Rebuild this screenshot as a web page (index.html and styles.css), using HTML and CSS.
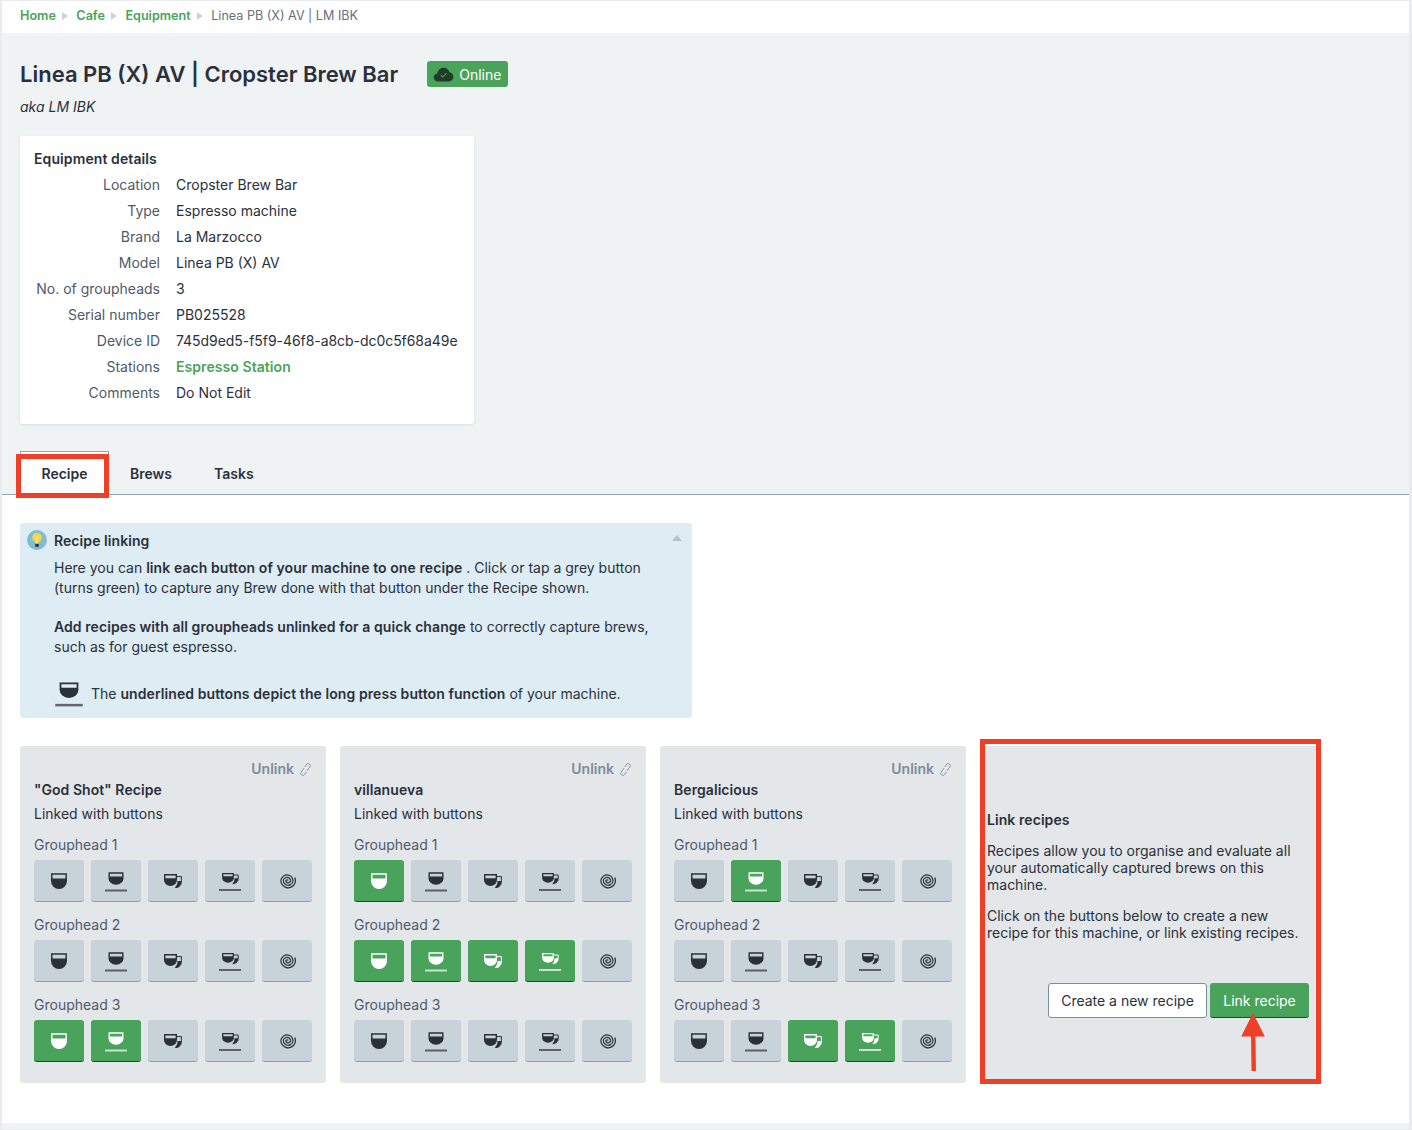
FILE: index.html
```html
<!DOCTYPE html>
<html lang="en">
<head>
<meta charset="utf-8">
<title>Linea PB (X) AV | Cropster Brew Bar</title>
<link rel="stylesheet" href="styles.css">
</head>
<body>
<svg class="defs" width="0" height="0" aria-hidden="true">
  <symbol id="cup" viewBox="0 0 16 16">
    <path d="M.8 1h14.400v7.300c0 3.700-3.200 6.900-7.200 6.900S.8 12 .8 8.300z" fill="none" stroke="currentColor" stroke-width="1.500"/>
    <path d="M.8 5.600h14.400v2.700c0 3.700-3.200 6.900-7.200 6.900S.8 12 .8 8.300z" fill="currentColor"/>
  </symbol>
  <symbol id="cup-line" viewBox="0 0 22 20">
    <path d="M4.200 1h13.600v5.400c0 3-2.900 5.600-6.800 5.600S4.200 9.400 4.200 6.400z" fill="none" stroke="currentColor" stroke-width="1.400"/>
    <path d="M4.200 4.600h13.600v1.800c0 3-2.900 5.600-6.800 5.600S4.200 9.400 4.200 6.400z" fill="currentColor"/>
    <rect x="0" y="17.500" width="22" height="2" fill="currentColor" opacity=".7"/>
  </symbol>
  <symbol id="cups" viewBox="0 0 18 14">
    <path d="M12.800 2.600h4.600v4.900c0 3-1.700 5.400-4.300 6l-2 .2" fill="none" stroke="currentColor" stroke-width="1"/>
    <path d="M13.600 7h3.800v.5c0 3-1.700 5.400-4.300 6l-2.500.2c1.800-1.500 3-3.800 3-6.700z" fill="currentColor"/>
    <path d="M.7.800h11.600v4.900c0 3.200-2.600 5.600-5.800 5.600S.7 8.900.7 5.700z" fill="none" stroke="currentColor" stroke-width="1.400"/>
    <path d="M.7 4.200h11.600v1.500c0 3.200-2.600 5.600-5.800 5.600S.7 8.900.7 5.700z" fill="currentColor"/>
  </symbol>
  <symbol id="cups-line" viewBox="0 0 22 18">
    <path d="M15 2h4.200v3.500c0 2.400-1.400 4.300-3.600 4.900l-1.800.2" fill="none" stroke="currentColor" stroke-width="1"/>
    <path d="M15.600 5.200h3.600v.3c0 2.400-1.400 4.300-3.600 4.900l-2.300.2c1.400-1.200 2.300-3 2.300-5.400z" fill="currentColor"/>
    <path d="M3.700.700h10.600v3.900c0 2.500-2.400 4.500-5.300 4.500S3.700 7.100 3.700 4.600z" fill="none" stroke="currentColor" stroke-width="1.300"/>
    <path d="M3.700 3.300h10.600v1.300c0 2.500-2.400 4.500-5.300 4.500S3.700 7.100 3.700 4.600z" fill="currentColor"/>
    <rect x="0" y="16" width="22" height="2" fill="currentColor" opacity=".7"/>
  </symbol>
  <symbol id="spiral" viewBox="0 0 16 16">
    <path d="M9 8a1 1 0 0 0-2 0a2.100 2.100 0 0 0 4.200 0a3.200 3.200 0 0 0-6.400 0a4.300 4.300 0 0 0 8.600 0a5.400 5.400 0 0 0-10.800 0a6.500 6.500 0 0 0 13 0" transform="rotate(-25 8 8)" fill="none" stroke="currentColor" stroke-width="1.100"/>
  </symbol>
  <symbol id="unlink" viewBox="0 0 14 16">
    <path d="M5.400 6.600 2.200 11a1.900 1.900 0 0 0 .4 2.600l.6.400a1.900 1.900 0 0 0 2.600-.4l2-2.800" fill="none" stroke="currentColor" stroke-width="1"/>
    <path d="M8.600 9.400l3.200-4.400a1.900 1.900 0 0 0-.4-2.600l-.6-.4a1.900 1.900 0 0 0-2.600.4l-2 2.800" fill="none" stroke="currentColor" stroke-width="1"/>
  </symbol>
</svg>

<div class="page">
  <nav class="crumbs">
    <a class="crumb-link">Home</a><span class="crumb-sep"></span>
    <a class="crumb-link">Cafe</a><span class="crumb-sep"></span>
    <a class="crumb-link">Equipment</a><span class="crumb-sep"></span>
    <span class="crumb-current">Linea PB (X) AV | LM IBK</span>
  </nav>

  <header class="hero">
    <div class="title-row">
      <h1 class="title">Linea PB (X) AV | Cropster Brew Bar</h1>
      <span class="badge">
        <svg class="badge-icon" viewBox="0 0 22 16" aria-hidden="true">
          <path d="M5.500 15.500C2.500 15.500.5 13.600.5 11.200c0-2.200 1.600-3.900 3.800-4.200C4.800 3.300 7.500.7 11 .7c3.100 0 5.600 2 6.400 4.800 2.400.4 4.100 2.500 4.100 5 0 2.800-2.200 5-5 5z" fill="#1f3d26"/>
          <path d="M8 8.500l2.200 2.200 4-4" fill="none" stroke="#4a9f5b" stroke-width="1.200"/>
        </svg>
        <span class="badge-text">Online</span>
      </span>
    </div>
    <p class="aka">aka LM IBK</p>

    <section class="details">
      <h2 class="details-title">Equipment details</h2>
      <dl class="details-grid">
        <dt>Location</dt><dd>Cropster Brew Bar</dd>
        <dt>Type</dt><dd>Espresso machine</dd>
        <dt>Brand</dt><dd>La Marzocco</dd>
        <dt>Model</dt><dd>Linea PB (X) AV</dd>
        <dt>No. of groupheads</dt><dd>3</dd>
        <dt>Serial number</dt><dd>PB025528</dd>
        <dt>Device ID</dt><dd class="device-id">745d9ed5-f5f9-46f8-a8cb-dc0c5f68a49e</dd>
        <dt>Stations</dt><dd><a class="station-link">Espresso Station</a></dd>
        <dt>Comments</dt><dd>Do Not Edit</dd>
      </dl>
    </section>

    <div class="tabs">
      <div class="tab tab-active">Recipe<span class="mark mark-tab"></span></div>
      <div class="tab">Brews</div>
      <div class="tab">Tasks</div>
    </div>
  </header>

  <main class="content">
    <section class="info">
      <span class="bulb">
        <svg viewBox="0 0 20 20" aria-hidden="true">
          <circle cx="10" cy="10" r="10" fill="#7fbcd2"/>
          <path d="M10 2.800a4.700 4.700 0 0 0-2.900 8.400c.7.600 1 1.200 1 2.300h3.800c0-1.100.3-1.700 1-2.300A4.700 4.700 0 0 0 10 2.800z" fill="#f7d44f"/>
          <path d="M9 7.500l1 1 1-1M10 8.500v5" fill="none" stroke="#fff" stroke-width=".7"/>
          <rect x="8.300" y="13.800" width="3.400" height="3" fill="#24303c"/>
        </svg>
      </span>
      <span class="info-caret"></span>
      <h3 class="info-title">Recipe linking</h3>
      <p class="info-p1">Here you can <b>link each button of your machine to one recipe</b> . Click or tap a grey button<br>(turns green) to capture any Brew done with that button under the Recipe shown.</p>
      <p class="info-p2"><b>Add recipes with all groupheads unlinked for a quick change</b> to correctly capture brews,<br>such as for guest espresso.</p>
      <div class="info-legend">
        <svg class="legend-icon" aria-hidden="true"><use href="#cup-line"/></svg>
        <span>The <b>underlined buttons depict the long press button function</b> of your machine.</span>
      </div>
    </section>

    <section class="cards">
      <article class="card">
        <a class="unlink">Unlink <svg class="unlink-icon" aria-hidden="true"><use href="#unlink"/></svg></a>
        <h4 class="card-title">"God Shot" Recipe</h4>
        <p class="card-sub">Linked with buttons</p>
        <div class="group-label">Grouphead 1</div>
        <div class="btns">
          <button class="btn"><svg class="i-cup"><use href="#cup"/></svg></button>
          <button class="btn"><svg class="i-line"><use href="#cup-line"/></svg></button>
          <button class="btn"><svg class="i-cups"><use href="#cups"/></svg></button>
          <button class="btn"><svg class="i-line"><use href="#cups-line"/></svg></button>
          <button class="btn"><svg class="i-spiral"><use href="#spiral"/></svg></button>
        </div>
        <div class="group-label">Grouphead 2</div>
        <div class="btns">
          <button class="btn"><svg class="i-cup"><use href="#cup"/></svg></button>
          <button class="btn"><svg class="i-line"><use href="#cup-line"/></svg></button>
          <button class="btn"><svg class="i-cups"><use href="#cups"/></svg></button>
          <button class="btn"><svg class="i-line"><use href="#cups-line"/></svg></button>
          <button class="btn"><svg class="i-spiral"><use href="#spiral"/></svg></button>
        </div>
        <div class="group-label">Grouphead 3</div>
        <div class="btns">
          <button class="btn on"><svg class="i-cup"><use href="#cup"/></svg></button>
          <button class="btn on"><svg class="i-line"><use href="#cup-line"/></svg></button>
          <button class="btn"><svg class="i-cups"><use href="#cups"/></svg></button>
          <button class="btn"><svg class="i-line"><use href="#cups-line"/></svg></button>
          <button class="btn"><svg class="i-spiral"><use href="#spiral"/></svg></button>
        </div>
      </article>

      <article class="card">
        <a class="unlink">Unlink <svg class="unlink-icon" aria-hidden="true"><use href="#unlink"/></svg></a>
        <h4 class="card-title">villanueva</h4>
        <p class="card-sub">Linked with buttons</p>
        <div class="group-label">Grouphead 1</div>
        <div class="btns">
          <button class="btn on"><svg class="i-cup"><use href="#cup"/></svg></button>
          <button class="btn"><svg class="i-line"><use href="#cup-line"/></svg></button>
          <button class="btn"><svg class="i-cups"><use href="#cups"/></svg></button>
          <button class="btn"><svg class="i-line"><use href="#cups-line"/></svg></button>
          <button class="btn"><svg class="i-spiral"><use href="#spiral"/></svg></button>
        </div>
        <div class="group-label">Grouphead 2</div>
        <div class="btns">
          <button class="btn on"><svg class="i-cup"><use href="#cup"/></svg></button>
          <button class="btn on"><svg class="i-line"><use href="#cup-line"/></svg></button>
          <button class="btn on"><svg class="i-cups"><use href="#cups"/></svg></button>
          <button class="btn on"><svg class="i-line"><use href="#cups-line"/></svg></button>
          <button class="btn"><svg class="i-spiral"><use href="#spiral"/></svg></button>
        </div>
        <div class="group-label">Grouphead 3</div>
        <div class="btns">
          <button class="btn"><svg class="i-cup"><use href="#cup"/></svg></button>
          <button class="btn"><svg class="i-line"><use href="#cup-line"/></svg></button>
          <button class="btn"><svg class="i-cups"><use href="#cups"/></svg></button>
          <button class="btn"><svg class="i-line"><use href="#cups-line"/></svg></button>
          <button class="btn"><svg class="i-spiral"><use href="#spiral"/></svg></button>
        </div>
      </article>

      <article class="card">
        <a class="unlink">Unlink <svg class="unlink-icon" aria-hidden="true"><use href="#unlink"/></svg></a>
        <h4 class="card-title">Bergalicious</h4>
        <p class="card-sub">Linked with buttons</p>
        <div class="group-label">Grouphead 1</div>
        <div class="btns">
          <button class="btn"><svg class="i-cup"><use href="#cup"/></svg></button>
          <button class="btn on"><svg class="i-line"><use href="#cup-line"/></svg></button>
          <button class="btn"><svg class="i-cups"><use href="#cups"/></svg></button>
          <button class="btn"><svg class="i-line"><use href="#cups-line"/></svg></button>
          <button class="btn"><svg class="i-spiral"><use href="#spiral"/></svg></button>
        </div>
        <div class="group-label">Grouphead 2</div>
        <div class="btns">
          <button class="btn"><svg class="i-cup"><use href="#cup"/></svg></button>
          <button class="btn"><svg class="i-line"><use href="#cup-line"/></svg></button>
          <button class="btn"><svg class="i-cups"><use href="#cups"/></svg></button>
          <button class="btn"><svg class="i-line"><use href="#cups-line"/></svg></button>
          <button class="btn"><svg class="i-spiral"><use href="#spiral"/></svg></button>
        </div>
        <div class="group-label">Grouphead 3</div>
        <div class="btns">
          <button class="btn"><svg class="i-cup"><use href="#cup"/></svg></button>
          <button class="btn"><svg class="i-line"><use href="#cup-line"/></svg></button>
          <button class="btn on"><svg class="i-cups"><use href="#cups"/></svg></button>
          <button class="btn on"><svg class="i-line"><use href="#cups-line"/></svg></button>
          <button class="btn"><svg class="i-spiral"><use href="#spiral"/></svg></button>
        </div>
      </article>

      <article class="card card-link">
        <span class="mark mark-card"></span>
        <h4 class="link-title">Link recipes</h4>
        <p class="link-p">Recipes allow you to organise and evaluate all your automatically captured brews on this machine.</p>
        <p class="link-p">Click on the buttons below to create a new recipe for this machine, or link existing recipes.</p>
        <div class="link-actions">
          <button class="action action-outline">Create a new recipe</button>
          <button class="action action-green">Link recipe</button>
        </div>
        <svg class="arrow" viewBox="0 0 26 60" aria-hidden="true">
          <path d="M13 0 25 24H15.500L16 59H11.500L11 24H1z" fill="#ee4026"/>
        </svg>
      </article>
    </section>
  </main>
  <div class="foot"></div>
</div>
</body>
</html>
```

FILE: styles.css
```css
* { box-sizing: border-box; }
html, body { margin: 0; padding: 0; }
body {
  background: #fff;
  font-family: Inter, "Liberation Sans", sans-serif;
  font-size: 14px;
  line-height: 20px;
  color: #2b303b;
}
.defs { position: absolute; }
.page {
  height: 1130px;
  border-left: 2px solid #e9ebed;
  border-right: 3px solid #e9ebed;
  border-top: 1px solid #e9ebed;
  display: flex;
  flex-direction: column;
  overflow: hidden;
}

/* breadcrumb */
.crumbs {
  height: 32px;
  flex: none;
  padding: 0 18px 2px;
  display: flex;
  align-items: center;
  font-size: 12.6px;
  background: #fff;
}
.crumb-link { color: #4aa35a; font-weight: 600; }
.crumb-current { color: #66717c; }
.crumb-sep {
  width: 0;
  height: 0;
  margin: 0 8px 0 6.5px;
  border-left: 6px solid #ccd3d8;
  border-top: 4px solid transparent;
  border-bottom: 4px solid transparent;
}

/* header band */
.hero {
  flex: none;
  background: #f0f3f4;
  padding: 25px 0 0 18px;
  border-bottom: 1px solid #94a6b5;
  height: 462px;
}
.title-row { display: flex; align-items: center; height: 32px; }
.title { margin: 0; font-size: 22px; line-height: 32px; font-weight: 600; color: #2b303b; }
.badge {
  margin-left: 29px;
  width: 81px;
  height: 26px;
  background: #4aa35a;
  border-radius: 3px;
  color: #fff;
  display: flex;
  align-items: center;
  gap: 5px;
  padding-left: 6px;
  font-size: 14px;
}
.badge-text { padding-top: 2px; }
.badge-icon { width: 21px; height: 15px; flex: none; }
.aka { margin: 7px 0 0; font-style: italic; color: #2b303b; }

.details {
  margin-top: 19px;
  width: 454px;
  height: 288px;
  background: #fff;
  border-radius: 3px;
  box-shadow: 0 1px 3px rgba(60, 80, 100, .12);
  padding: 13px 14px 0;
}
.details-title { margin: 0; font-size: 14px; line-height: 20px; font-weight: 600; letter-spacing: .1px; }
.details-grid {
  margin: 3px 0 0;
  display: grid;
  grid-template-columns: 126px 1fr;
  grid-auto-rows: 26px;
  column-gap: 16px;
  align-items: center;
}
.details-grid dt { text-align: right; color: #4f5a66; white-space: nowrap; }
.details-grid dd { margin: 0; color: #2b303b; white-space: nowrap; }
.device-id { letter-spacing: -.05px; }
.station-link { color: #4aa35a; font-weight: 600; letter-spacing: .07px; }

/* tabs */
.tabs { margin-top: 27px; display: flex; height: 44px; }
.tab {
  position: relative;
  padding: 0 21px;
  line-height: 46px;
  font-weight: 600;
  color: #2b303b;
}
.tab-active {
  background: #fff;
  border-top: 1px solid #94a6b5;
  border-left: 1px solid #94a6b5;
  border-right: 1px solid #94a6b5;
  width: 89px;
  text-align: center;
  padding: 0;
  margin-bottom: -1px;
  height: 45px;
  line-height: 44px;
}
.mark { position: absolute; border: 5px solid #ee4026; pointer-events: none; }
.mark-tab { left: -5px; top: 2px; width: 93px; height: 44px; }
.mark-card { left: 0; right: 0; top: -7px; bottom: -1px; }

/* content */
.content { flex: 1; padding: 28px 18px 0; background: #fff; }
.info {
  position: relative;
  width: 672px;
  height: 195px;
  background: #deecf3;
  border-radius: 3px;
  padding: 8px 0 0 34px;
}
.bulb { position: absolute; left: 7px; top: 7px; width: 20px; height: 20px; }
.bulb svg { display: block; width: 20px; height: 20px; }
.info-caret {
  position: absolute;
  right: 10px;
  top: 12px;
  border-left: 5px solid transparent;
  border-right: 5px solid transparent;
  border-bottom: 6px solid #b4c2cc;
}
.info-title { margin: 0; font-size: 14px; line-height: 20px; font-weight: 600; letter-spacing: .07px; }
.info b { font-weight: 600; letter-spacing: .08px; }
.info-p1 { margin: 7px 0 0; }
.info-p2 { margin: 19px 0 0; }
.info-legend {
  margin: 25px 0 0 1px;
  display: flex;
  align-items: center;
  gap: 8px;
  height: 24px;
}
.legend-icon { width: 28px; height: 25px; flex: none; color: #2b303b; }

/* cards */
.cards { margin-top: 28px; display: flex; gap: 14px; align-items: flex-start; }
.card {
  width: 306px;
  height: 337px;
  background: #e3e7ea;
  border-radius: 3px;
  padding: 13px 14px 0;
  flex: none;
}
.unlink {
  display: flex;
  justify-content: flex-end;
  align-items: center;
  gap: 5px;
  height: 20px;
  color: #7b8d9c;
  font-weight: 600;
}
.unlink-icon { width: 13px; height: 15px; }
.card-title { margin: 1px 0 0; font-size: 14px; line-height: 20px; font-weight: 600; letter-spacing: .07px; }
.card-sub { margin: 4px 0 0; }
.group-label { margin-top: 11px; color: #4f5a66; }
.group-label ~ .group-label { margin-top: 13px; }
.btns { margin-top: 5px; display: flex; gap: 7px; }
.btn {
  width: 50px;
  height: 42px;
  padding: 0;
  border: 0;
  border-bottom: 1px solid #8e9ea9;
  border-radius: 3px;
  background: #c8d3d9;
  color: #2b303b;
  display: flex;
  align-items: center;
  justify-content: center;
}
.btn.on { background: #4aa35a; border-bottom-color: #174d26; color: #fff; }
.i-cup { width: 16px; height: 16px; }
.i-line { width: 22px; height: 20px; margin-top: 3px; }
.i-cups { width: 18px; height: 14px; }
.i-spiral { width: 18px; height: 18px; margin: 1px 1px 0 0; }

/* link recipes */
.card-link {
  position: relative;
  width: 341px;
  border-radius: 0;
  padding: 64px 14px 0 7px;
}
.link-title { margin: 0; font-size: 14px; line-height: 20px; font-weight: 600; letter-spacing: .07px; }
.link-p { margin: 12px 0 0; line-height: 17px; }
.link-p + .link-p { margin-top: 14px; }
.link-actions { margin: 42px -2px 0 0; display: flex; justify-content: flex-end; gap: 3px; }
.action {
  height: 35px;
  border-radius: 3px;
  font: 14px/20px Inter, "Liberation Sans", sans-serif;
  padding: 0;
}
.action-outline { width: 159px; background: #fff; border: 1px solid #7b8d9c; color: #2b303b; }
.action-green { width: 99px; padding-top: 1px; background: #4aa35a; border: 0; border-bottom: 1px solid #174d26; color: #fff; }
.arrow { position: absolute; left: 260px; top: 267px; width: 26px; height: 59px; }

.foot { flex: none; height: 7px; background: #f0f3f4; border-bottom: 1px solid #e9ebed; }
```
